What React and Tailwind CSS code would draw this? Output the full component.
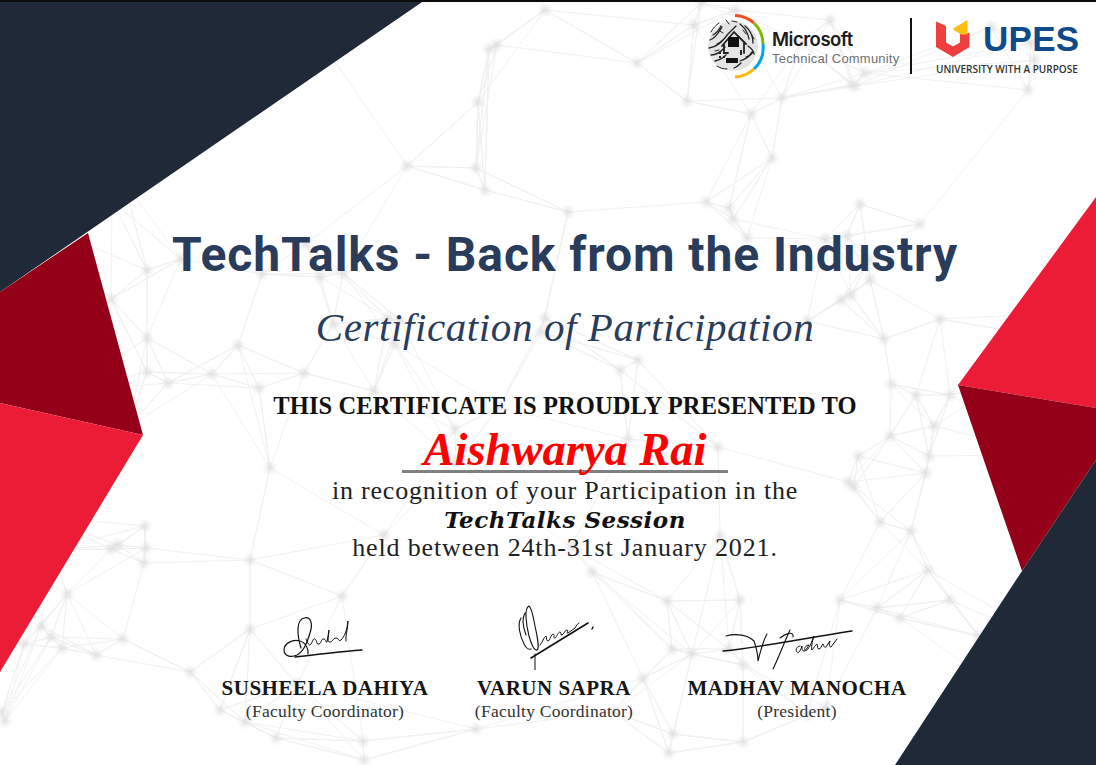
// Certificate page: TechTalks participation certificate
const serif = "font-['Liberation_Serif',serif]";

// ── background mesh ─────────────────────────────────────────────
function makeMesh() {
  let seed = 4711;
  const rnd = () => {
    seed = (seed * 16807) % 2147483647;
    return seed / 2147483647;
  };
  const pts = [
    [147, 270], [147, 338], [147, 372], [145, 526], [118, 545], [111, 549], [67, 594], [123, 639],
    [41, 626], [51, 637], [62, 648], [96, 655], [920, 224], [870, 280], [916, 395], [934, 426],
    [890, 436], [858, 456], [926, 473], [880, 522], [848, 482], [928, 570], [840, 600], [950, 600],
    [545, 10], [735, 10], [830, 20], [1035, 60], [238, 345], [250, 560], [400, 320], [620, 370],
  ];
  for (let i = 0; i < 120; i++) pts.push([Math.round(rnd() * 1096), Math.round(rnd() * 765)]);
  const lines = [];
  pts.forEach((p, i) => {
    const near = pts
      .map((q, j) => ({ j, d: (p[0] - q[0]) ** 2 + (p[1] - q[1]) ** 2 }))
      .filter((n) => n.j !== i)
      .sort((a, b) => a.d - b.d)
      .slice(0, 5);
    near.forEach((n) => lines.push([p, pts[n.j]]));
  });
  return { pts, lines };
}
const mesh = makeMesh();

function Backdrop() {
  return (
    <svg className="absolute inset-0 h-full w-full" viewBox="0 0 1096 765">
      <defs>
        <filter id="soft" x="-200%" y="-200%" width="500%" height="500%">
          <feGaussianBlur stdDeviation="2.5" />
        </filter>
      </defs>
      <g stroke="#f1f1f1" strokeWidth="1">
        {mesh.lines.map(([a, b], i) => (
          <line key={i} x1={a[0]} y1={a[1]} x2={b[0]} y2={b[1]} />
        ))}
      </g>
      <g fill="#dedede" filter="url(#soft)">
        {mesh.pts.map((p, i) => (
          <circle key={i} cx={p[0]} cy={p[1]} r="4" />
        ))}
      </g>
      <polygon points="0,0 425,0 0,292" fill="#1f2937" />
      <polygon points="0,292 88,233 143,435 0,403" fill="#930018" />
      <polygon points="0,403 143,435 0,672" fill="#ec1c36" />
      <polygon points="1096,197 958,385 1096,408" fill="#ec1c36" />
      <polygon points="958,385 1096,408 1096,460 1022,571" fill="#930018" />
      <polygon points="1096,460 1022,571 895,765 1096,765" fill="#1f2937" />
    </svg>
  );
}

// ── logos ───────────────────────────────────────────────────────
function CommunityMark() {
  return (
    <svg width="62" height="66" viewBox="0 0 62 66" fill="none">
      <circle cx="26" cy="33" r="25" fill="#e4e4e4" />
      <g stroke="#222" strokeWidth="1.3" strokeLinecap="round">
        <path d="M3 27c6-2 9-8 12-13M2 35c8-1 13-6 19-14l8-8M4 42c6 0 10-3 14-8M8 48c5-1 8-3 11-6M6 22c4-2 6-5 8-9M10 31c3-1 5-3 7-5" />
        <path d="M33 11c5 4 8 9 9 15M38 13c5 4 8 10 8 17M41 33c4 3 6 6 6 8M33 48c6-2 10-5 13-9M27 55c3-1 5-3 7-5M39 44c3-1 5-3 6-5" />
        <path d="M12 10c-3 2-6 5-8 9M19 7l3 4M10 53c3 2 6 3 10 3M25 8l5 1M8 38l4-1M45 22l2 4M36 17l3 4M13 18l3 2" strokeWidth="1" />
        <path d="M15 33l12-14 12 12M17 31v9M37 30v10M17 40h4" strokeWidth="1.8" />
      </g>
      <rect x="21" y="24" width="11" height="10" fill="#111" />
      <rect x="19" y="45" width="12" height="5" fill="#111" />
      <g fill="#222">
        <rect x="12" y="39" width="2" height="2" />
        <rect x="16" y="39" width="2" height="2" />
        <rect x="12" y="43" width="2" height="2" />
        <rect x="16" y="43" width="2" height="2" />
        <rect x="33" y="37" width="2" height="5" />
      </g>
      <g strokeWidth="3">
        <path d="M28 2.5A30 30 0 0 1 47 10" stroke="#f25022" />
        <path d="M47 10A30 30 0 0 1 56 31" stroke="#7fba00" />
        <path d="M56 31A30 30 0 0 1 47 56" stroke="#00a4ef" />
        <path d="M47 56A30 30 0 0 1 28 64" stroke="#ffb900" />
      </g>
    </svg>
  );
}

function UpesMark() {
  return (
    <svg width="34" height="37" viewBox="0 0 34 37">
      <path d="M0 1.5L10 6V22.5L17 26.5L24 22.5V13L33.5 13V27L17 37L0 27Z" fill="#ee3e3e" />
      <path d="M16.5 9L31.5 0V14.5H25Z" fill="#fdc010" />
    </svg>
  );
}

function LogoBar() {
  return (
    <div className="flex items-center justify-end pr-[18px] pt-[11px]">
      <CommunityMark />
      <div className="ml-[3px] flex w-[127px] flex-col">
        <span className="font-['Inter',sans-serif] text-[18.5px] font-semibold leading-[24px] tracking-[-0.5px] text-[#1c1c1c]">Microsoft</span>
        <span className="whitespace-nowrap font-['Liberation_Sans',sans-serif] text-[13px] leading-[15px] tracking-[0.2px] text-[#707070]">Technical Community</span>
      </div>
      <div className="ml-[11px] h-[56px] w-[2px] bg-[#111111]" />
      <div className="ml-[24px] mt-[3px] flex w-[142px] flex-col items-start">
        <div className="flex items-center">
          <UpesMark />
          <span className="ml-[13px] font-['Liberation_Sans',sans-serif] text-[35px] font-bold leading-[36px] tracking-[0.3px] text-[#0f4a8a]">UPES</span>
        </div>
        <span className="mt-[6px] whitespace-nowrap font-['Open_Sans',sans-serif] text-[10px] font-semibold leading-[12px] text-[#333333]">
          UNIVERSITY WITH A PURPOSE
        </span>
      </div>
    </div>
  );
}

// ── signatures ──────────────────────────────────────────────────
function SigDahiya() {
  return (
    <svg width="84" height="55" viewBox="0 0 84 55" fill="none" stroke="#111" strokeWidth="1.2" strokeLinecap="round">
      <path d="M18 33C14 20 13 5 21 3c7-2 9 6 6 15-3 10-6 18-13 22-6 3-13 1-13-5 0-7 9-11 16-9 5 1 9 8 8 13" />
      <path d="M23 24c2 4 3 8 5 5s2-6 4-5 1 6 4 5 2-6 5-5 1 4 3 3l2-12c0 5-2 11 0 12 3 1 4-4 7-4s2 4 5 2c3-3 6-9 7-19 0 8-3 15-2 20" strokeWidth="1" />
      <path d="M12 42C32 40 60 36 79 35" strokeWidth="1.5" />
    </svg>
  );
}

function SigSapra() {
  return (
    <svg width="86" height="66" viewBox="0 0 86 66" fill="none" stroke="#111" strokeWidth="1.1" strokeLinecap="round">
      <path d="M18 2c-5 2-3 18 0 30 2 7 5 15 8 14 3-2 0-14-2-24-2-10-3-18-6-20zM10 14c-4 6-1 18 3 26 2 4 5 6 7 5M14 9c-3 5-2 14 1 22" />
      <path d="M29 41c3-3 3-7 6-9 1 2 0 5 2 5s3-7 5-7 0 5 2 4 3-6 5-6 0 4 2 3 3-5 5-5-1 4 1 3l7-5c1-2 3-5 4-5" strokeWidth="1" />
      <path d="M20 54L77 19" strokeWidth="1.6" />
      <path d="M24 50V66" strokeWidth="1" />
      <path d="M82 23l-1 2" strokeWidth="1.4" />
    </svg>
  );
}

function SigManocha() {
  return (
    <svg className="mr-[18px]" width="132" height="41" viewBox="0 0 132 41" fill="none" stroke="#111" strokeWidth="1.1" strokeLinecap="round">
      <path d="M1 22C40 18 90 8 130 2" strokeWidth="1.5" />
      <path d="M4 7C14 4 26 6 32 12C34 18 36 28 36 32C38 24 42 10 45 5" />
      <path d="M68 1C62 14 56 30 51 40M58 9C64 4 72 2 71 8" />
      <path d="M78 17c-3 0-5 4-3 6s4-3 5-6c0 3 0 5 2 5s3-3 5-6c-3 0-5 3-4 5s3-1 5-4l4-10c-2 6-3 12-2 14 2-2 3-5 5-6 1 2 0 5 2 5s2-3 4-5c1 2 1 4 3 3l4-6c-1 3-1 6 1 6l6-8" strokeWidth="1" />
    </svg>
  );
}

// one signature block in the footer row
function Signer({ sign, name, role, width }) {
  return (
    <div className={`flex flex-col items-center ${width}`}>
      <div className="flex h-[66px] items-end">{sign}</div>
      <p className={`${serif} mt-[6px] text-[21px] font-bold leading-[24px] tracking-[0.5px] text-[#161616]`}>{name}</p>
      <p className={`${serif} text-[17.5px] leading-[22px] tracking-[0.25px] text-[#333333]`}>{role}</p>
    </div>
  );
}

export default function App() {
  return (
    <div className="relative h-[765px] w-full overflow-hidden bg-white">
      <Backdrop />
      <div className="relative flex flex-col">
        <div className="h-[2px] bg-[#0b0b0b]" />
        <LogoBar />

        {/* ── Certificate text ───────────────────────────────────── */}
        <div className="mt-[146px] flex flex-col items-center pl-[34px]">
          <h1 className="font-['Roboto',sans-serif] text-[48px] font-bold leading-[60px] tracking-[0.9px] text-[#2a3c5c]">
            TechTalks - Back from the Industry
          </h1>
          <p className={`${serif} mt-[14px] text-[41px] italic leading-[56px] tracking-[0.6px] text-[#2a3c5c]`}>
            Certification of Participation
          </p>
          <p className={`${serif} mt-[38px] text-[24.5px] font-bold leading-[26px] tracking-[0.1px] text-[#111111]`}>
            THIS CERTIFICATE IS PROUDLY PRESENTED TO
          </p>
          <p className={`${serif} mt-[6px] h-[48px] w-[326px] border-b-[3px] border-[#808080] text-center text-[46.5px] font-bold italic leading-[50px] text-[#ff0000]`}>
            <span className="whitespace-nowrap">Aishwarya Rai</span>
          </p>
          <p className={`${serif} mt-[3px] text-[26px] leading-[30px] tracking-[0.8px] text-[#222222]`}>
            in recognition of your Participation in the
          </p>
          <p className="font-['DejaVu_Serif',serif] text-[23px] font-bold italic leading-[27px] tracking-[0.5px] text-[#111111]">
            TechTalks Session
          </p>
          <p className={`${serif} text-[26px] leading-[30px] tracking-[0.85px] text-[#222222]`}>
            held between 24th-31st January 2021.
          </p>
        </div>

        {/* ── Signatures ─────────────────────────────────────────── */}
        <div className="ml-[215px] mt-[41px] flex">
          <Signer width="w-[220px]" sign={<SigDahiya />} name="SUSHEELA DAHIYA" role="(Faculty Coordinator)" />
          <Signer width="w-[238px]" sign={<SigSapra />} name="VARUN SAPRA" role="(Faculty Coordinator)" />
          <Signer width="w-[248px]" sign={<SigManocha />} name="MADHAV MANOCHA" role="(President)" />
        </div>
      </div>
    </div>
  );
}
